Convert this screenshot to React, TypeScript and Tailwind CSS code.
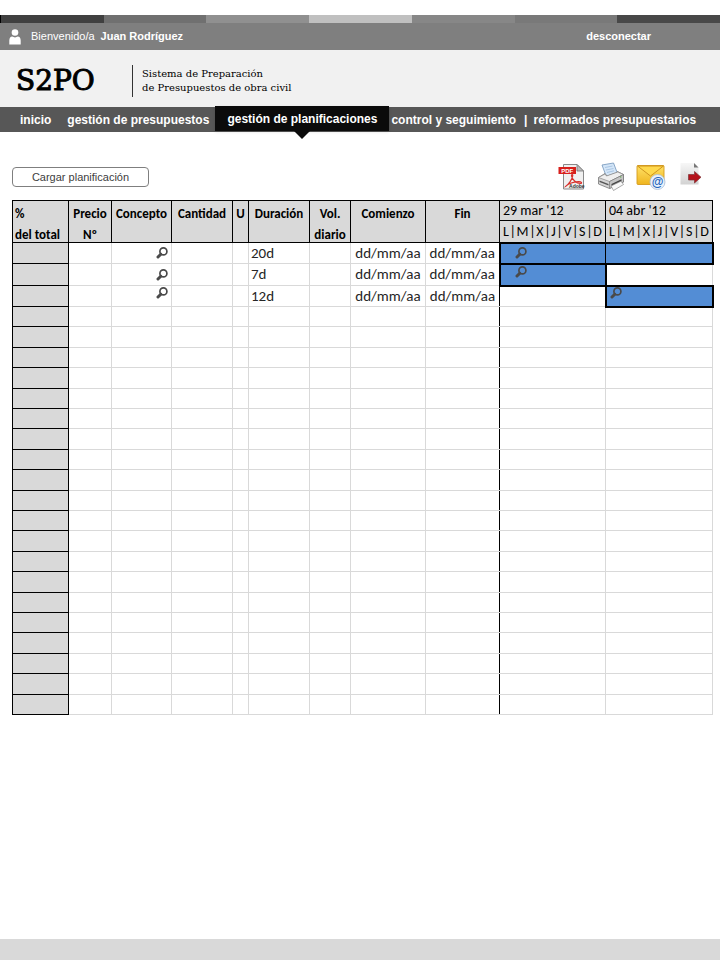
import { clsx } from "clsx";

const stripes = [
  "bg-[#404040]",
  "bg-[#707070]",
  "bg-[#909090]",
  "bg-[#c0c0c0]",
  "bg-[#878787]",
  "bg-[#797979]",
  "bg-[#484848]",
];

const columns = [
  "w-[56px]",
  "w-[43px]",
  "w-[60px]",
  "w-[61px]",
  "w-[16px]",
  "w-[61px]",
  "w-[41px]",
  "w-[75px]",
  "w-[74px]",
  "w-[106px]",
  "w-[107px]",
];

const headings = [
  ["Precio", "Nº"],
  ["Concepto"],
  ["Cantidad"],
  ["U"],
  ["Duración"],
  ["Vol.", "diario"],
  ["Comienzo"],
  ["Fin"],
];

const weeks = ["29 mar '12", "04 abr '12"];
const days = ["L", "M", "X", "J", "V", "S", "D"];

const tasks = [
  { duration: "20d", align: "items-center", height: "h-[21px]" },
  { duration: "7d", align: "items-center", height: "h-[22px]" },
  { duration: "12d", align: "items-start", height: "h-[21px]" },
];

const emptyRows = Array.from({ length: 20 }, (_, i) => i);

function UserIcon() {
  return (
    <svg viewBox="0 0 12 16" className="h-4 w-3" fill="#fff" aria-hidden="true">
      <circle cx="6" cy="3.5" r="3.3" />
      <path d="M0.3 15.5V11.5Q0.5 7.6 3.2 7.6Q6 9.2 8.8 7.6Q11.5 7.6 11.7 11.5V15.5Z" />
    </svg>
  );
}

function Magnifier() {
  return (
    <svg viewBox="0 0 12 12" className="size-3" fill="none" stroke="#4a4a4a" aria-hidden="true">
      <circle cx="7.4" cy="4.4" r="3.5" strokeWidth="1.7" />
      <path d="M4.8 7.2L2 10" strokeWidth="3" strokeLinecap="round" />
    </svg>
  );
}

function PdfIcon() {
  return (
    <svg viewBox="0 0 28 28" className="size-7" aria-hidden="true">
      <path d="M5.5 1.5H19L25.5 8V26H5.5Z" fill="#f0f0f0" stroke="#8a8a8a" />
      <path d="M19 1.5V8H25.5Z" fill="#bdbdbd" stroke="#777" strokeWidth="0.8" />
      <rect x="0.5" y="4" width="17.5" height="7" fill="#d8201c" />
      <text x="9.2" y="9.8" textAnchor="middle" fontSize="6" fontWeight="700" fill="#fff" fontFamily="Liberation Sans, sans-serif">
        PDF
      </text>
      <path
        d="M7.5 23.5C10 22.5 14.5 16 14.8 12.5C14.8 11.2 13.2 11.5 13.5 13C14.2 16.5 18 20.5 22.5 20.5C24.5 20.3 23.5 18.5 20.5 18.6C15 18.8 9 21 7.5 23.5Z"
        fill="none"
        stroke="#d8302c"
        strokeWidth="1.2"
      />
      <text x="18.8" y="25" textAnchor="middle" fontSize="5" fontWeight="700" fill="#333" fontFamily="Liberation Sans, sans-serif">
        Adobe
      </text>
    </svg>
  );
}

function PrinterIcon() {
  return (
    <svg viewBox="0 0 28 30" className="h-[30px] w-7" aria-hidden="true">
      <path d="M5 3L16.5 1L20.5 11.5L9.5 15Z" fill="#d4e6f8" stroke="#7d9dbf" strokeWidth="0.9" />
      <path d="M8 5.5L15.5 4M9 8L16.5 6.5M10 10.5L17 8.8" stroke="#9dbddd" strokeWidth="0.8" />
      <path d="M1.5 15.5L8 11.5L10 14L20 10.5L20.5 9.5L26.5 12.5V20L12.5 26.5L1.5 22Z" fill="#d5d5d5" stroke="#777" strokeWidth="0.8" />
      <path d="M1.5 15.5L12.5 19.5L26.5 12.5L20.8 10L9.5 14L8 12Z" fill="#efefef" stroke="#888" strokeWidth="0.7" />
      <path d="M12.5 19.5V26.5L26.5 20V12.5Z" fill="#c4c4c4" stroke="#777" strokeWidth="0.7" />
      <path d="M2.5 18.5L11.5 22V23.5L2.5 20Z" fill="#555" />
      <path d="M14.5 22L24.5 17.3V19.2L14.5 24Z" fill="#414141" />
      <path d="M14 24L24 19.2L26.5 22.5L16.5 28.5Z" fill="#f8f8f8" stroke="#888" strokeWidth="0.7" />
      <circle cx="23.7" cy="14.9" r="0.7" fill="#58a840" />
    </svg>
  );
}

function MailIcon() {
  return (
    <svg viewBox="0 0 30 28" className="h-7 w-[30px]" aria-hidden="true">
      <defs>
        <linearGradient id="envelope" x1="0" y1="0" x2="0" y2="1">
          <stop offset="0" stopColor="#ffe269" />
          <stop offset="1" stopColor="#efb51f" />
        </linearGradient>
      </defs>
      <rect x="1" y="2.5" width="27" height="19" rx="1" fill="url(#envelope)" stroke="#d59b1c" strokeWidth="0.9" />
      <path d="M1.5 3H27.5L14.5 13Z" fill="#ffd94d" stroke="#c98d18" strokeWidth="0.9" />
      <circle cx="21.5" cy="19" r="7.5" fill="#e9f1fb" stroke="#a9bdd8" strokeWidth="0.8" />
      <text x="21.5" y="22.6" textAnchor="middle" fontSize="12" fontWeight="700" fill="#2465bd" fontFamily="Liberation Sans, sans-serif">
        @
      </text>
    </svg>
  );
}

function ExportIcon() {
  return (
    <svg viewBox="0 0 22 24" className="h-6 w-[22px]" aria-hidden="true">
      <defs>
        <linearGradient id="sheet" x1="0" y1="0" x2="0" y2="1">
          <stop offset="0" stopColor="#f7f7f7" />
          <stop offset="1" stopColor="#d2d2d2" />
        </linearGradient>
      </defs>
      <path d="M0.5 1H14L18.5 5.5V22.5H0.5Z" fill="url(#sheet)" />
      <path d="M14 1V5.5H18.5Z" fill="#777" />
      <path d="M8.5 12.5H14.5V9.5L21 15.2L14.5 21V18H8.5Z" fill="#b5121b" stroke="#7c3338" strokeWidth="0.7" />
    </svg>
  );
}

function Header() {
  return (
    <header>
      <div className="mt-[15px] flex h-2 border-l border-black">
        {stripes.map((color) => (
          <div key={color} className={clsx("flex-1", color)} />
        ))}
      </div>
      <div className="flex h-[27px] items-center bg-[#7f7f7f] pr-[69px] pl-[9px] text-[11px] text-white">
        <UserIcon />
        <span className="ml-2.5">Bienvenido/a</span>
        <strong className="ml-1.5">Juan Rodríguez</strong>
        <a href="#desconectar" className="ml-auto font-bold">
          desconectar
        </a>
      </div>
      <div className="flex h-[57px] items-center bg-[#f1f1f1] pt-1 pl-4 font-['Rockwell','DejaVu_Serif',serif] text-black">
        <h1 className="w-[116px] text-[28px] leading-8 [-webkit-text-stroke:1px_black]">S2PO</h1>
        <p className="border-l border-[#333] py-0.5 pl-[9px] text-[10px] leading-[14px]">
          Sistema de Preparación
          <br />
          de Presupuestos de obra civil
        </p>
      </div>
    </header>
  );
}

function NavBar() {
  return (
    <nav className="flex h-[25px] items-center bg-[#575757] pl-5 text-xs font-bold whitespace-nowrap text-white">
      <a href="#inicio">inicio</a>
      <a href="#presupuestos" className="ml-4">
        gestión de presupuestos
      </a>
      <a
        href="#planificaciones"
        aria-current="page"
        className="relative -mt-0.5 ml-1.5 flex h-[25px] items-center bg-[#0b0b0b] px-3 shadow"
      >
        gestión de planificaciones
        <svg viewBox="0 0 16 8" className="absolute top-full left-1/2 h-2 w-4 -translate-x-1/2" aria-hidden="true">
          <path d="M0 0H16L8 8Z" fill="#0b0b0b" />
        </svg>
      </a>
      <a href="#control" className="ml-0.5">
        control y seguimiento
      </a>
      <span className="mr-1.5 ml-2">|</span>
      <a href="#reformados">reformados presupuestarios</a>
    </nav>
  );
}

function Toolbar() {
  return (
    <div className="flex h-[30px] items-center pr-[11px]">
      <button className="h-5 w-[137px] rounded border border-[#7f7f7f] bg-white text-[11px] text-[#404040]">
        Cargar planificación
      </button>
      <div className="ml-auto flex gap-[11px]">
        <button aria-label="Exportar a PDF">
          <PdfIcon />
        </button>
        <button aria-label="Imprimir">
          <PrinterIcon />
        </button>
        <button aria-label="Enviar por correo">
          <MailIcon />
        </button>
        <button aria-label="Salir" className="ml-[3px] self-start">
          <ExportIcon />
        </button>
      </div>
    </div>
  );
}

const th = "border border-black bg-[#d9d9d9] p-0 align-top text-[13px] leading-[21px] font-bold";
const td = "border border-[#d9d9d9] p-0";
const total = "border border-black bg-[#d9d9d9] p-0";
const bar = "border-2 border-black bg-[#538dd5] p-0";
const weekCell = "h-5 border border-black bg-[#d9d9d9] px-[3px] py-0 text-left text-sm leading-[19px] font-normal";

function PlanTable() {
  return (
    <table className="mt-2 w-full table-fixed border-collapse font-[Calibri,Lato,sans-serif] whitespace-nowrap text-black">
      <colgroup>
        {columns.map((width, i) => (
          <col key={i} className={width} />
        ))}
      </colgroup>
      <thead>
        <tr className="h-5">
          <th rowSpan={2} className={clsx(th, "pl-0.5 text-left")}>
            <div className="h-10 pt-0.5">
              %<br />
              del total
            </div>
          </th>
          {headings.map((lines) => (
            <th key={lines[0]} rowSpan={2} className={clsx(th, "text-center")}>
              <div className="h-10 pt-0.5">
                {lines.map((line) => (
                  <div key={line}>{line}</div>
                ))}
              </div>
            </th>
          ))}
          {weeks.map((week) => (
            <th key={week} className={weekCell}>
              {week}
            </th>
          ))}
        </tr>
        <tr className="h-[22px]">
          {weeks.map((week) => (
            <th key={week} className={weekCell}>
              <div className="flex justify-between">
                {days.map((day, i) => (
                  <span key={day} className="contents">
                    {i > 0 && <span>|</span>}
                    <span>{day}</span>
                  </span>
                ))}
              </div>
            </th>
          ))}
        </tr>
      </thead>
      <tbody className="text-[15px] leading-[19px] text-[#262626]">
        {tasks.map((task, i) => (
          <tr key={task.duration} className={task.height}>
            <td className={total} />
            <td className={td} />
            <td className={td}>
              <div className={clsx("flex h-[19px] justify-end pr-[3px]", task.align)}>
                <Magnifier />
              </div>
            </td>
            <td className={td} />
            <td className={td} />
            <td className={clsx(td, "pl-0.5")}>{task.duration}</td>
            <td className={td} />
            <td className={clsx(td, "text-center")}>dd/mm/aa</td>
            <td className={clsx(td, "border-r-black text-center")}>dd/mm/aa</td>
            {i < 2 ? (
              <td className={clsx(bar, i === 0 && "border-r")}>
                <div className={clsx("flex h-[18px] pl-[14px]", i === 0 ? "items-center" : "items-start")}>
                  <Magnifier />
                </div>
              </td>
            ) : (
              <td className={td} />
            )}
            {i === 0 && <td className={clsx(bar, "border-l")} />}
            {i === 1 && <td className={td} />}
            {i === 2 && (
              <td className={bar}>
                <div className="flex h-[18px] items-start pl-[3px]">
                  <Magnifier />
                </div>
              </td>
            )}
          </tr>
        ))}
        {emptyRows.map((row) => (
          <tr key={row} className={row % 5 === 1 || row % 5 === 3 ? "h-[21px]" : "h-5"}>
            <td className={total} />
            {columns.slice(1).map((_, i) => (
              <td key={i} className={clsx(td, i === 7 && "border-r-black", i === 8 && "border-l-black")} />
            ))}
          </tr>
        ))}
      </tbody>
    </table>
  );
}

export default function App() {
  return (
    <div className="flex min-h-screen flex-col bg-white font-['Liberation_Sans',Arial,sans-serif]">
      <Header />
      <NavBar />
      <main className="pt-[30px] pr-[7px] pb-6 pl-3">
        <Toolbar />
        <PlanTable />
      </main>
      <footer className="mt-auto h-[21px] bg-[#d9d9d9]" />
    </div>
  );
}
